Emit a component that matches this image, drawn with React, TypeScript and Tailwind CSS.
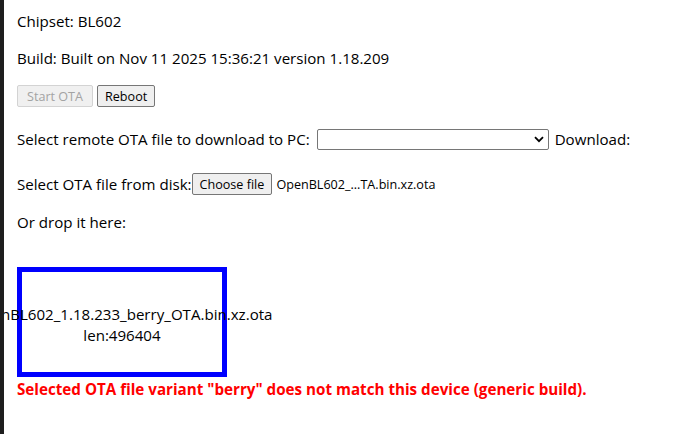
import React from "react";

const font = { fontFamily: '"Open Sans", "Noto Sans", Arial, sans-serif' };

function Btn({ children, disabled }: { children: React.ReactNode; disabled?: boolean }) {
  return (
    <span
      className={
        disabled
          ? "inline-flex h-[22px] items-center rounded-[2px] border border-[#d3d3d3] bg-[#f0f0f0] px-[9px] text-[12.6px] text-[#a3a3a3]"
          : "inline-flex h-[22px] items-center rounded-[2px] border border-[#767676] bg-[#efefef] px-[7px] text-[12.6px] text-black"
      }
    >
      {children}
    </span>
  );
}

export default function App() {
  return (
    <div className="relative h-[434px] overflow-hidden bg-white text-[15.1px] leading-[21px] text-black" style={font}>
      <div className="flex flex-col pl-[17px] pt-[11px]">
        <p>Chipset: BL602</p>
        <p className="mt-4">Build: Built on Nov 11 2025 15:36:21 version 1.18.209</p>
        <div className="mt-[16px] flex h-[22px] gap-[4px]">
          <Btn disabled>Start OTA</Btn>
          <Btn>Reboot</Btn>
        </div>
        <div className="mt-[21px] flex h-[22px] items-center">
          <span>Select remote OTA file to download to PC:</span>
          <span className="ml-[7px] flex h-[21px] w-[232px] items-center justify-end rounded-[2px] border border-[#767676] bg-white pr-[4px]">
            <svg width="10" height="7" viewBox="0 0 10 7">
              <path d="M1 1.2 L5 5.2 L9 1.2" fill="none" stroke="#000" strokeWidth="1.8" />
            </svg>
          </span>
          <span className="ml-[6px]">Download:</span>
        </div>
        <div className="mt-[23px] flex h-[22px] items-center">
          <span>Select OTA file from disk:</span>
          <Btn>Choose file</Btn>
          <span className="ml-[4px] text-[12.6px]">OpenBL602_...TA.bin.xz.ota</span>
        </div>
        <p className="mt-[17px]">Or drop it here:</p>
        <div className="mt-[34px] flex h-[110px] w-[210px] flex-col items-center justify-center border-[5px] border-[#0000ff] pt-[5px]">
          <span className="whitespace-nowrap">OpenBL602_1.18.233_berry_OTA.bin.xz.ota</span>
          <span>len:496404</span>
        </div>
        <p className="mt-[2px] text-[15.2px] font-bold text-[#ff0000]">
          Selected OTA file variant "berry" does not match this device (generic build).
        </p>
      </div>
      <div className="absolute left-0 top-0 h-full w-[4px] bg-[#1e1e1e]" />
    </div>
  );
}
